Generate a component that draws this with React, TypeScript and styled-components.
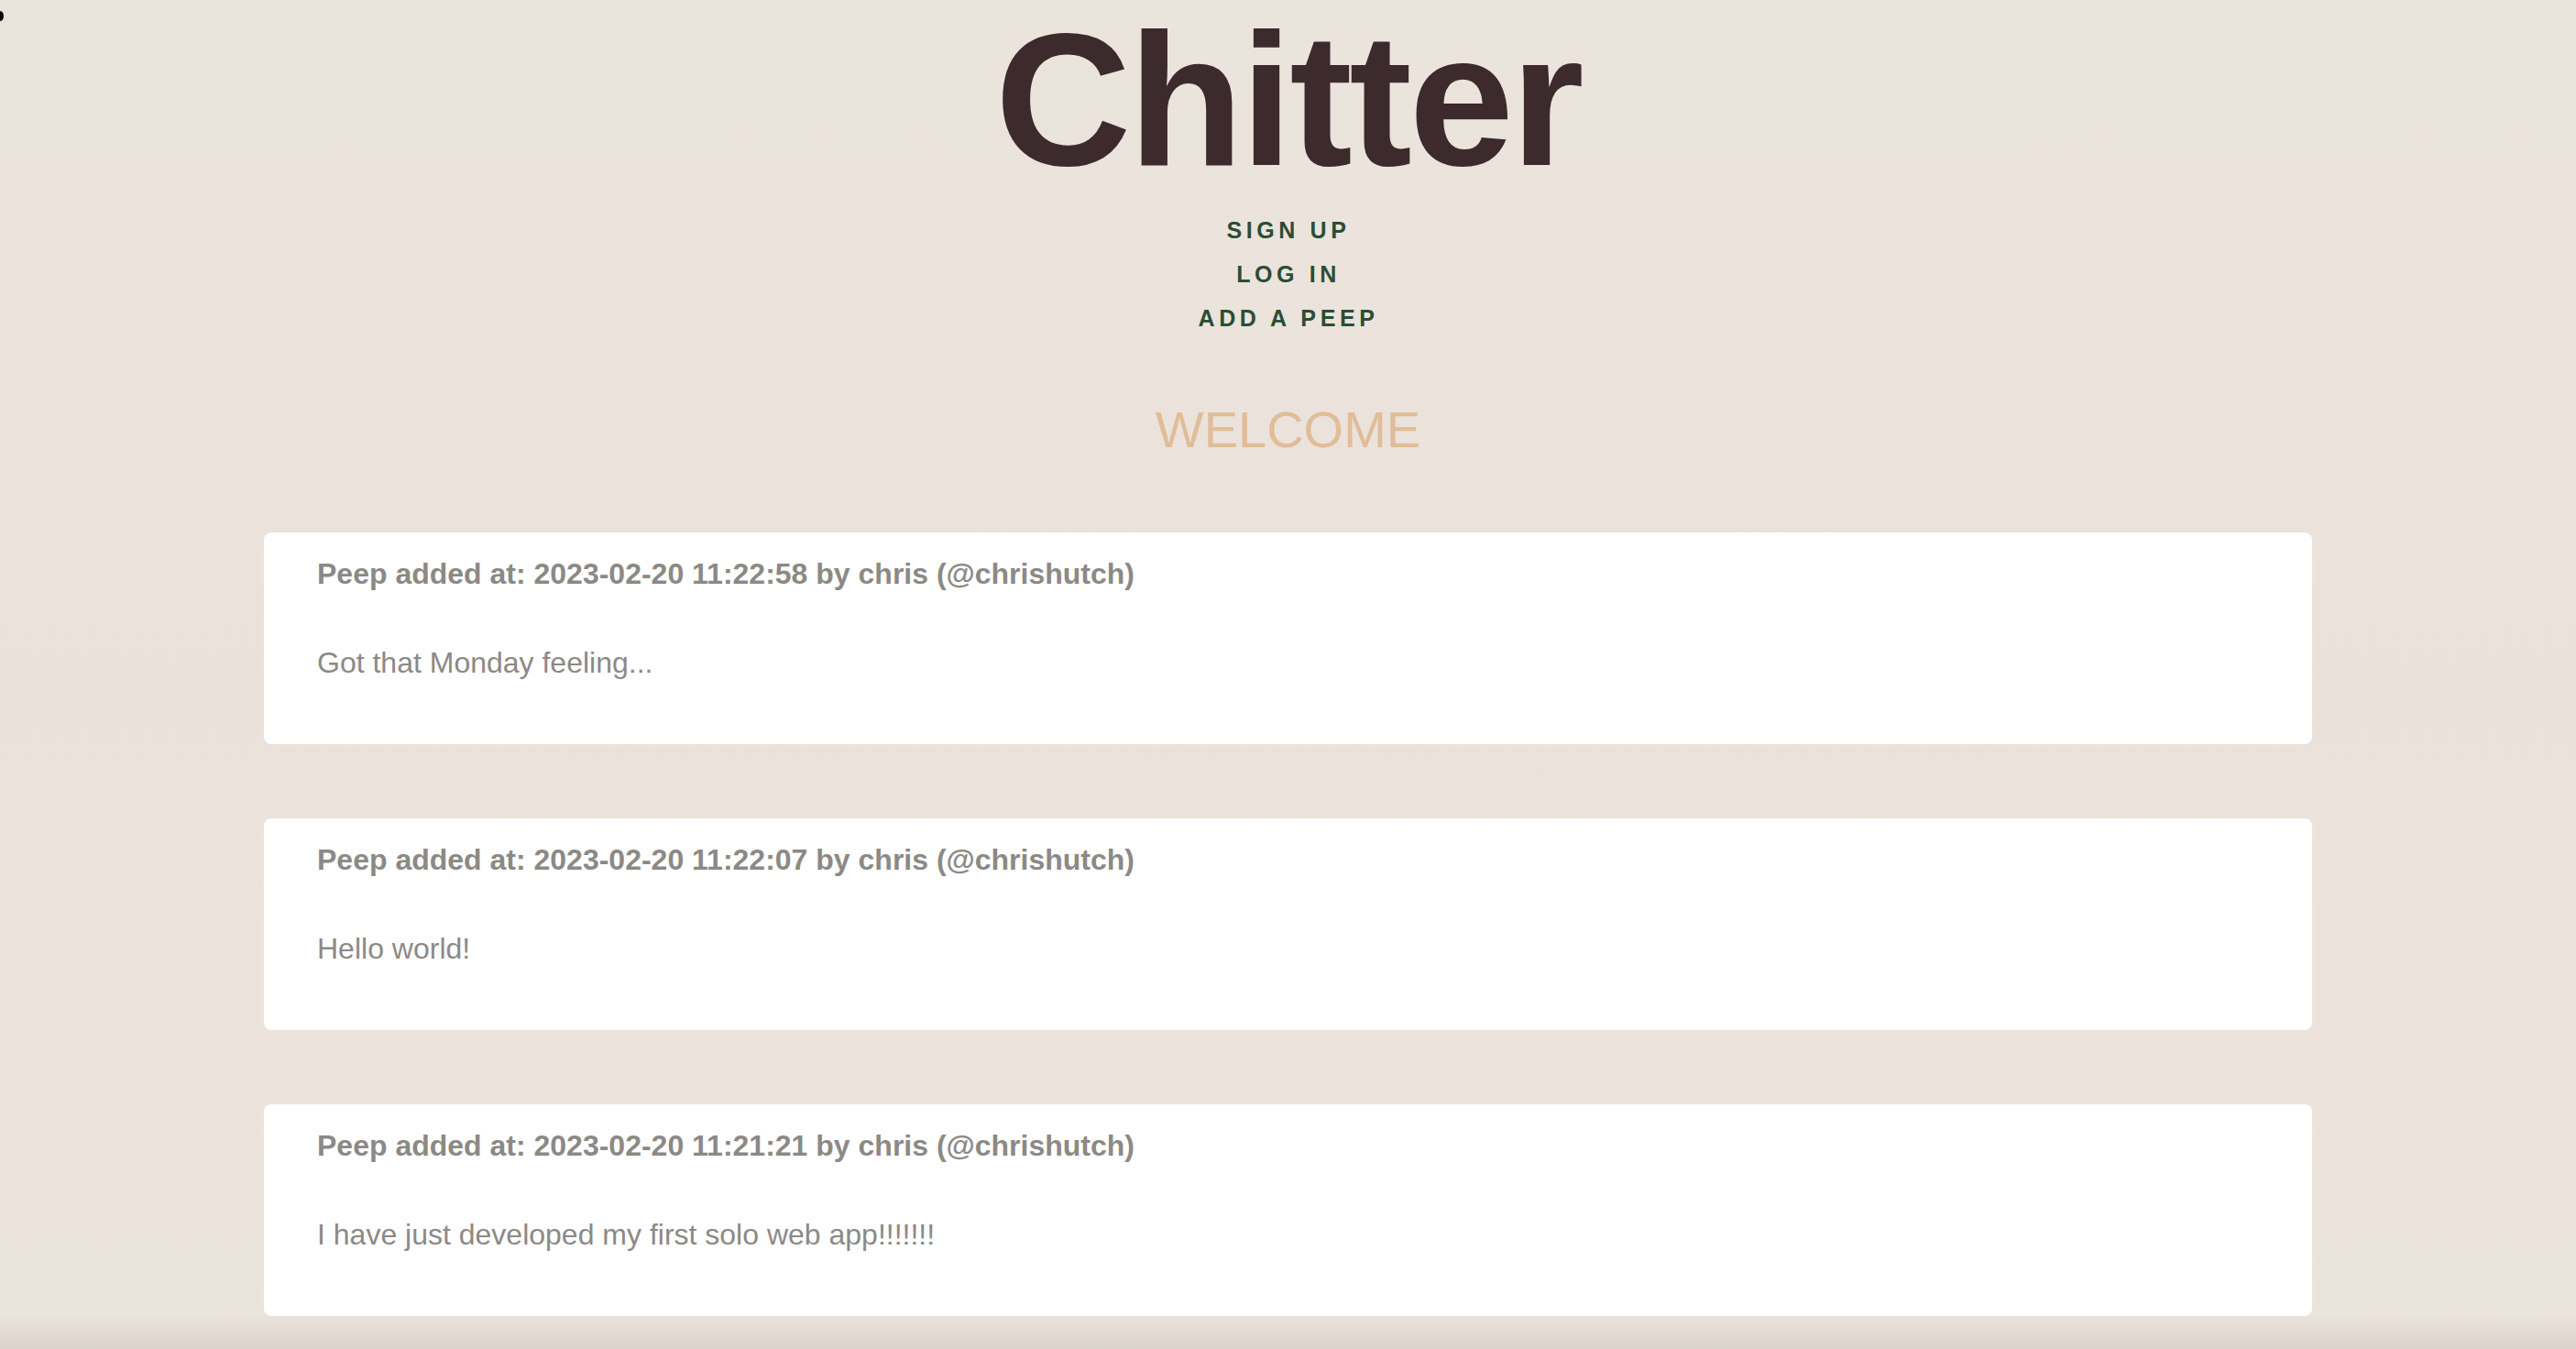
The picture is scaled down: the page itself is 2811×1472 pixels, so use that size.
import styled, { createGlobalStyle } from "styled-components";

const GlobalStyle = createGlobalStyle`
  html, body {
    margin: 0;
    padding: 0;
    background: #ebe4dc;
  }
  body {
    font-family: "Liberation Sans", Arial, Helvetica, sans-serif;
    min-height: 100vh;
  }
`;

const Page = styled.div`
  position: relative;
  min-height: 100vh;
  padding-top: 6px;
  box-sizing: border-box;
  display: flex;
  flex-direction: column;
  align-items: center;
  background: linear-gradient(180deg, #ebe4dd 0%, #eae2da 50%, #ebe4dd 100%);
`;

const Dot = styled.span`
  position: absolute;
  left: -4px;
  top: 12px;
  width: 8px;
  height: 11px;
  border-radius: 50%;
  background: #000;
`;

const Title = styled.h1`
  margin: 0;
  font-size: 206px;
  line-height: 206px;
  font-weight: 700;
  letter-spacing: -3.5px;
  color: #3d2a2d;
`;

const Nav = styled.nav`
  margin-top: 15px;
  display: flex;
  flex-direction: column;
  align-items: center;
`;

const NavLink = styled.a`
  display: block;
  font-size: 25px;
  line-height: 48px;
  font-weight: 700;
  letter-spacing: 4.6px;
  margin-right: -1px;
  color: #2b4d34;
  text-decoration: none;
  cursor: pointer;
`;

const Welcome = styled.h2`
  margin: 69px 0 0;
  font-size: 56px;
  line-height: 57px;
  font-weight: 400;
  color: #e0bd98;
`;

const PeepList = styled.div`
  margin-top: 84px;
  width: 2235px;
  display: flex;
  flex-direction: column;
  gap: 81px;
  padding-bottom: 80px;
`;

const PeepCard = styled.div`
  background: #ffffff;
  border-radius: 8px;
  padding: 27px 58px 71px;
  color: #8c8985;
`;

const PeepMeta = styled.p`
  margin: 0 0 61px;
  font-size: 32px;
  line-height: 36px;
  font-weight: 700;
`;

const PeepBody = styled.p`
  margin: 0;
  font-size: 32px;
  line-height: 36px;
  font-weight: 400;
`;

const BottomShade = styled.div`
  position: fixed;
  left: 0;
  right: 0;
  bottom: 0;
  height: 38px;
  pointer-events: none;
  background: linear-gradient(
    180deg,
    rgba(120, 100, 80, 0) 0%,
    rgba(110, 95, 80, 0.05) 45%,
    rgba(90, 80, 70, 0.12) 100%
  );
`;

const peeps = [
  { id: 1, time: "2023-02-20 11:22:58", name: "chris", handle: "chrishutch", text: "Got that Monday feeling..." },
  { id: 2, time: "2023-02-20 11:22:07", name: "chris", handle: "chrishutch", text: "Hello world!" },
  { id: 3, time: "2023-02-20 11:21:21", name: "chris", handle: "chrishutch", text: "I have just developed my first solo web app!!!!!!!" },
];

export default function App() {
  return (
    <>
      <GlobalStyle />
      <Page>
        <Dot />
        <Title>Chitter</Title>
        <Nav>
          <NavLink>SIGN UP</NavLink>
          <NavLink>LOG IN</NavLink>
          <NavLink>ADD A PEEP</NavLink>
        </Nav>
        <Welcome>WELCOME</Welcome>
        <PeepList>
          {peeps.map((peep) => (
            <PeepCard key={peep.id}>
              <PeepMeta>
                Peep added at: {peep.time} by {peep.name} (@{peep.handle})
              </PeepMeta>
              <PeepBody>{peep.text}</PeepBody>
            </PeepCard>
          ))}
        </PeepList>
        <BottomShade />
      </Page>
    </>
  );
}
